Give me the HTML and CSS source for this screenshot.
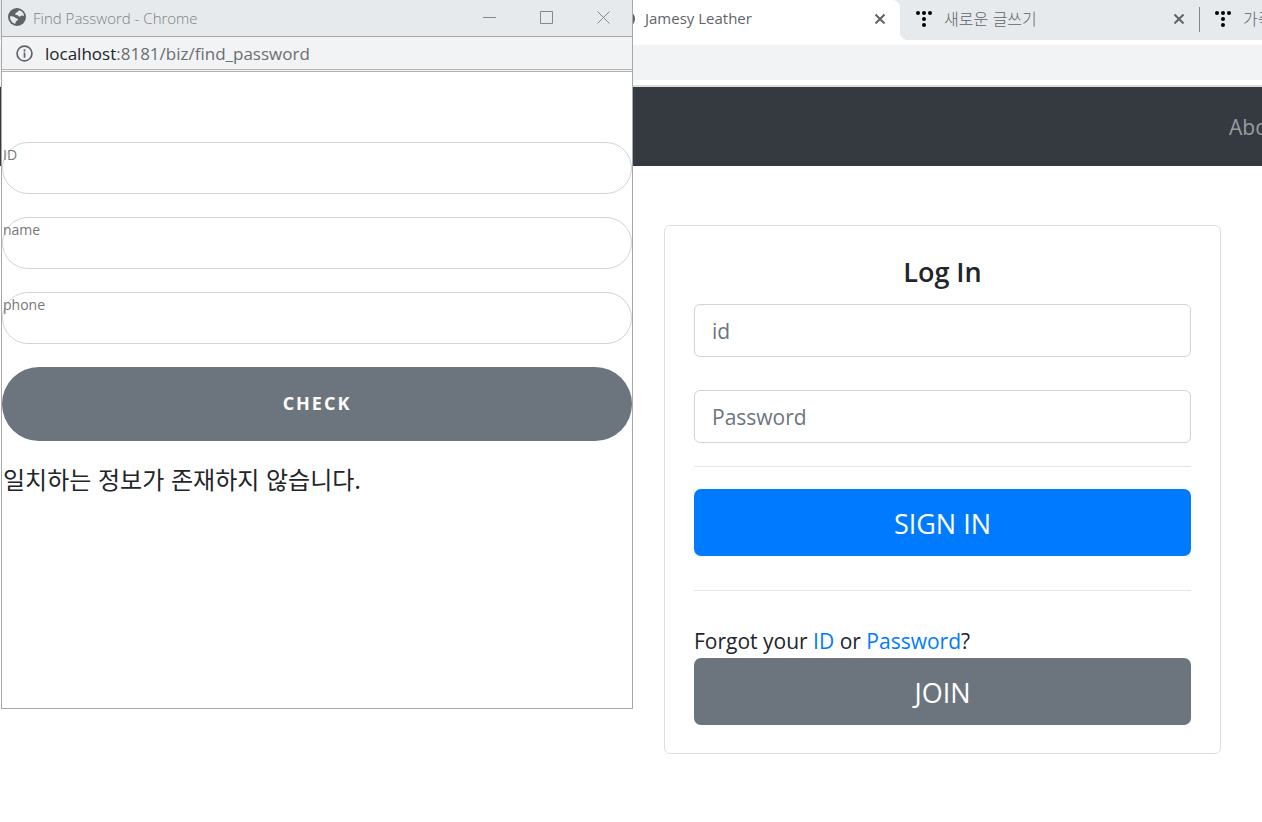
FILE: index.html
```html
<!DOCTYPE html>
<html lang="ko">

<head>
    <meta charset="UTF-8">
    <meta name="viewport" content="width=device-width, initial-scale=1.0">
    <title>Jamesy Leather</title>
    <link rel="stylesheet" href="styles.css">
</head>

<body>
    <!-- main browser window -->
    <div class="browser">
        <div class="tab-strip">
            <div class="tab active">
                <svg class="tab-icon" viewBox="0 0 24 24" aria-hidden="true">
                    <path fill="#5f6368" d="M12 0a12 12 0 1 0 0 24 12 12 0 0 0 0-24z" />
                </svg>
                <span class="tab-title">Jamesy Leather</span>
                <button class="tab-close" aria-label="Close tab">
                    <svg viewBox="0 0 10 10"><path d="M0.5 0.5l9 9M9.5 0.5l-9 9" /></svg>
                </button>
            </div>
            <div class="tab">
                <svg class="tab-icon" viewBox="0 0 16 16" aria-hidden="true">
                    <circle cx="2" cy="2" r="2" /><circle cx="8" cy="2" r="2" /><circle cx="14" cy="2" r="2" />
                    <circle cx="8" cy="8" r="2" /><circle cx="8" cy="14" r="2" />
                </svg>
                <span class="tab-title">새로운 글쓰기</span>
                <button class="tab-close" aria-label="Close tab">
                    <svg viewBox="0 0 10 10"><path d="M0.5 0.5l9 9M9.5 0.5l-9 9" /></svg>
                </button>
            </div>
            <div class="tab">
                <svg class="tab-icon" viewBox="0 0 16 16" aria-hidden="true">
                    <circle cx="2" cy="2" r="2" /><circle cx="8" cy="2" r="2" /><circle cx="14" cy="2" r="2" />
                    <circle cx="8" cy="8" r="2" /><circle cx="8" cy="14" r="2" />
                </svg>
                <span class="tab-title">가죽</span>
            </div>
        </div>
        <div class="toolbar">
            <div class="omnibox"></div>
        </div>

        <nav class="navbar">
            <a href="#">About</a>
        </nav>

        <main class="login">
            <form class="card">
                <h1>Log In</h1>
                <input class="field" type="text" placeholder="id" aria-label="id">
                <input class="field" type="password" placeholder="Password" aria-label="Password">
                <hr>
                <button class="btn btn-primary" type="button">SIGN IN</button>
                <hr class="wide">
                <p>Forgot your <a href="#">ID</a> or <a href="#">Password</a>?</p>
                <button class="btn btn-secondary" type="button">JOIN</button>
            </form>
        </main>
    </div>

    <!-- find password popup -->
    <section class="popup">
        <header class="title-bar">
            <svg class="globe" viewBox="0 0 18 18" aria-hidden="true">
                <circle cx="9" cy="9" r="9" fill="#5f6368" />
                <path fill="#e7eaed" d="M2 8.500c1-.5 3-.5 4.500.5 1 .5 1 1.500 2.500 1.500 1.500.5 1 2-.5 2.500-1 .5-1 1.500-1 2.800C4.500 15.500 2 12.500 2 8.500z" />
                <path fill="#e7eaed" d="M11 2.200c-1 .8-1 1.800-2.500 2.300-1.500.3-1 1.800-1 2.500 1.500 0 2-.5 2.500.5.5 1.500 2 1.500 2.500.5 1-1 2-.5 3.500 0C16 5 14 2.800 11 2.200z" />
            </svg>
            <span class="window-title">Find Password - Chrome</span>
            <div class="window-buttons">
                <button aria-label="Minimize">
                    <svg viewBox="0 0 14 14"><path d="M0 7.500h13" /></svg>
                </button>
                <button aria-label="Maximize">
                    <svg viewBox="0 0 14 14"><path d="M.5 1.500h12v12H.5z" /></svg>
                </button>
                <button aria-label="Close">
                    <svg viewBox="0 0 14 14"><path d="M.5 1.500l12 12M12.500 1.500l-12 12" /></svg>
                </button>
            </div>
        </header>
        <div class="address-bar">
            <svg class="info" viewBox="0 0 16 16" aria-hidden="true">
                <circle cx="8" cy="8" r="7" fill="none" stroke="#5f6368" stroke-width="1.600" />
                <path fill="#5f6368" d="M7.200 4h1.600v2H7.200zM7.200 7h1.600v5H7.200z" />
            </svg>
            <span>localhost<span class="path">:8181/biz/find_password</span></span>
        </div>
        <form class="find-form">
            <div class="group">
                <input type="text" id="userId">
                <label for="userId">ID</label>
            </div>
            <div class="group">
                <input type="text" id="userName">
                <label for="userName">name</label>
            </div>
            <div class="group">
                <input type="text" id="userPhone">
                <label for="userPhone">phone</label>
            </div>
            <button class="check" type="button">CHECK</button>
            <p>일치하는 정보가 존재하지 않습니다.</p>
        </form>
    </section>
</body>

</html>
```

FILE: styles.css
```css
* {
    box-sizing: border-box;
}

body {
    margin: 0;
    min-height: 100vh;
    position: relative;
    overflow-x: hidden;
    background: #fff;
    color: #212529;
    font-family: "Open Sans", "Noto Sans CJK KR", sans-serif;
    font-size: 21px;
}

button,
input {
    font-family: inherit;
}

/* browser tabs */
.tab-strip {
    display: flex;
    height: 40px;
    padding-left: calc(50% - 30px);
    overflow: hidden;
    background: #e7eaed;
}

.tab {
    position: relative;
    display: flex;
    flex: 0 0 299px;
    align-items: center;
    height: 38px;
    padding: 0 15px 0 16px;
    color: #5f6368;
    font-family: "Noto Sans CJK KR", sans-serif;
    font-size: 16px;
    font-weight: 300;
    line-height: 20px;
}

.tab.active {
    height: 40px;
    padding-bottom: 2px;
    background: #fff;
    border-radius: 0 8px 0 0;
    font-family: "Open Sans", sans-serif;
    font-size: 15px;
    font-weight: 400;
}

.tab.active .tab-icon {
    width: 18px;
    height: 18px;
    margin-right: 10px;
}

.tab.active::after {
    content: "";
    position: absolute;
    left: 100%;
    bottom: 0;
    width: 8px;
    height: 8px;
    background: radial-gradient(circle at 100% 0, #e7eaed 8px, #fff 8px);
}

.tab + .tab + .tab::before {
    content: "";
    position: absolute;
    left: 0;
    top: 7px;
    width: 1px;
    height: 25px;
    background: #80868b;
}

.tab-icon {
    flex: none;
    width: 16px;
    height: 16px;
    margin-right: 12px;
}

.tab-title {
    flex: 1;
    padding-bottom: 2px;
    white-space: nowrap;
}

.tab-close {
    padding: 0;
    border: none;
    background: none;
    line-height: 0;
}

.tab-close svg {
    width: 10px;
    height: 10px;
    fill: none;
    stroke: #5f6368;
    stroke-width: 2;
}

.toolbar {
    padding: 5px 0;
    border-bottom: 2px solid #dadce0;
}

.omnibox {
    height: 35px;
    background: #f1f3f4;
}

/* page in the main window */
.navbar {
    display: flex;
    align-items: center;
    height: 79px;
    padding-left: calc(100% - 33px);
    overflow: hidden;
    background: #343a40;
}

.navbar a {
    color: #999c9f;
    text-decoration: none;
}

.login {
    margin-left: 50%;
    padding: 59px 41px 68px 33px;
}

.card {
    display: flex;
    flex-direction: column;
    padding: 28px 29px;
    border: 1px solid #dfdfdf;
    border-radius: 6px;
}

.card h1 {
    margin: 0 0 14px;
    font-size: 27px;
    font-weight: 600;
    line-height: 36px;
    text-align: center;
}

.field {
    width: 100%;
    height: 53px;
    padding: 0 17px;
    border: 1px solid #ced4da;
    border-radius: 6px;
    font-size: 21px;
}

.field + .field {
    margin-top: 33px;
}

.field::placeholder {
    color: #6c757d;
    opacity: 1;
}

.card hr {
    width: 100%;
    margin: 23px 0 22px;
    border: none;
    border-top: 1px solid #e5e5e5;
}

.card hr.wide {
    margin: 34px 0;
}

.btn {
    height: 67px;
    padding: 2px 0 0;
    border: none;
    border-radius: 7px;
    color: #fff;
    font-size: 27px;
}

.btn-primary {
    background: #007bff;
}

.btn-secondary {
    background: #6c757d;
}

.card p {
    margin: 0;
    line-height: 33px;
}

.card a {
    color: #007bff;
    text-decoration: none;
}

/* popup window */
.popup {
    position: absolute;
    top: 0;
    left: 1px;
    width: calc(50% + 1px);
    min-height: 709px;
    background: #fff;
    border: 1px solid #a8a8a8;
    border-top: none;
}

.title-bar {
    display: flex;
    align-items: center;
    height: 37px;
    padding: 0 21px 2px 6px;
    background: #e7eaed;
    border-bottom: 1px solid #a8a8a8;
    color: #7c7f82;
    font-size: 15px;
    font-weight: 300;
}

.globe {
    width: 18px;
    height: 18px;
    margin-right: 7px;
}

.window-title {
    flex: 1;
    padding-top: 2px;
}

.window-buttons {
    display: flex;
    gap: 43px;
}

.window-buttons button {
    padding: 0;
    border: none;
    background: none;
    line-height: 0;
}

.window-buttons svg {
    width: 14px;
    height: 14px;
    fill: none;
    stroke: #85888a;
}

.address-bar {
    display: flex;
    align-items: center;
    gap: 12px;
    height: 35px;
    padding: 0 14px;
    background: #f1f3f4;
    border-bottom: 3px double #b4b4b4;
    font-size: 17px;
}

.info {
    width: 17px;
    height: 17px;
}

.path {
    color: #6b6e72;
}

.find-form {
    padding-top: 70px;
}

.group {
    position: relative;
    margin-bottom: 23px;
}

.group input {
    display: block;
    width: 100%;
    height: 52px;
    padding: 0 24px;
    border: 1px solid #ced4da;
    border-radius: 26px;
    font-size: 15px;
}

.group label {
    position: absolute;
    top: 0;
    left: 1px;
    color: #777;
    font-size: 14px;
    line-height: 25px;
}

.check {
    display: block;
    width: 100%;
    height: 74px;
    padding: 0 0 2px;
    border: none;
    border-radius: 37px;
    background: #6c757d;
    color: #fff;
    font-size: 18px;
    font-weight: 700;
    letter-spacing: 2px;
}

.find-form p {
    margin: 21px 1px;
    font-family: "Noto Sans CJK KR", sans-serif;
    font-size: 24px;
    font-weight: 400;
    line-height: 34px;
}
```
